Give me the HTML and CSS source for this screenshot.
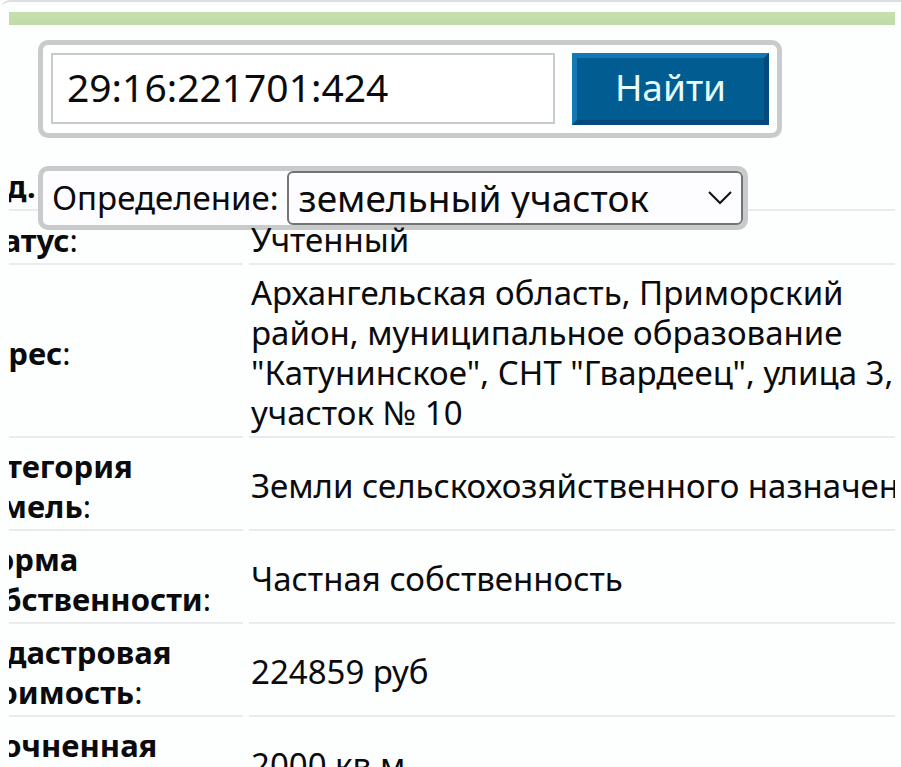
FILE: index.html
```html
<!DOCTYPE html>
<html lang="ru">
<head>
<meta charset="utf-8">
<title>Кадастровая справка</title>
<link rel="stylesheet" href="styles.css">
</head>
<body>
<main class="page">
  <div class="strip"></div>
  <form class="search">
    <input class="search-input" type="text" aria-label="Кадастровый номер" value="29:16:221701:424">
    <button class="search-button" type="button">Найти</button>
  </form>
  <section class="details">
    <form class="kind">
      <label for="kind">Определение:</label>
      <span class="select-wrap">
        <select id="kind"><option>земельный участок</option></select>
        <svg class="chevron" viewBox="0 0 24 14" aria-hidden="true"><path d="M1 1 L12 12 L23 1"/></svg>
      </span>
    </form>
    <table class="facts">
      <tr><th><b>Кад.</b></th><td></td></tr>
      <tr><th><span class="over"><b>Статус</b>:</span></th><td><span class="over">Учтенный</span></td></tr>
      <tr><th><b>Адрес</b>:</th><td class="address">Архангельская область, Приморский район, муниципальное образование "Катунинское", СНТ "Гвардеец", улица 3, участок № 10</td></tr>
      <tr><th><b>Категория<br>земель</b>:</th><td>Земли сельскохозяйственного назначения</td></tr>
      <tr><th><b>Форма<br>собственности</b>:</th><td>Частная собственность</td></tr>
      <tr><th><b>Кадастровая<br>стоимость</b>:</th><td>224859 руб</td></tr>
      <tr><th><b>Уточненная<br>площадь</b>:</th><td>2000 кв.м</td></tr>
    </table>
  </section>
</main>
</body>
</html>
```
FILE: styles.css
```css
* { box-sizing: border-box; }
body {
  margin: 0;
  height: 100vh;
  overflow: hidden;
  background: #fdfefe;
  color: #0b0b0d;
  font-family: "Noto Sans", sans-serif;
  font-size: 33px;
  line-height: 40px;
}
.page {
  display: flex;
  flex-direction: column;
  height: 100vh;
  padding: 10px 6px 0 8px;
  border: 1px solid #dedede;
  border-width: 2px 0 0 1px;
  border-left-color: transparent;
  border-radius: 10px 0 0 0;
}
.strip {
  flex: none;
  height: 13px;
  background: linear-gradient(#c8e0b0, #bfdaa8);
}
.search {
  display: flex;
  gap: 17px;
  width: fit-content;
  margin: 15px 0 0 29px;
  padding: 8px;
  border: 5px solid #c9cacb;
  border-radius: 10px;
}
.search-input {
  width: 504px;
  height: 71px;
  padding: 0 14px 4px;
  border: 2px solid #c9cacb;
  background: #fff;
  color: inherit;
  font: inherit;
  font-size: 39px;
}
.search-button {
  width: 197px;
  height: 72px;
  padding: 0 0 4px;
  border: 5px solid;
  border-color: #1279b4 #06497c #06497c #1279b4;
  background: #005c91;
  color: #e6fcff;
  font: inherit;
  font-size: 37px;
}
.details {
  position: relative;
  flex: 1;
  min-height: 0;
  margin-top: 19px;
  overflow: hidden;
}
.kind {
  position: absolute;
  z-index: 1;
  top: 9px;
  left: 29px;
  display: flex;
  align-items: center;
  gap: 8px;
  padding: 0 0 0 9px;
  border: 5px solid #c9cacb;
  border-radius: 10px;
  background: #fdfdff;
}
.select-wrap {
  position: relative;
  display: flex;
}
.kind select {
  width: 456px;
  height: 54px;
  padding: 0 10px;
  appearance: none;
  border: 2px solid #737476;
  border-radius: 6px;
  background: #fdfdff;
  color: inherit;
  font: inherit;
  font-size: 37px;
}
.chevron {
  position: absolute;
  top: 20px;
  right: 11px;
  width: 24px;
  height: 14px;
  fill: none;
  stroke: #111;
  stroke-width: 2;
  pointer-events: none;
}
.facts {
  width: calc(100% + 58px);
  margin-left: -52px;
  border-collapse: separate;
  border-spacing: 6px;
  table-layout: fixed;
}
.facts tr { height: 48px; }
.facts th, .facts td {
  padding: 2px 0 3px 2px;
  border-bottom: 2px solid #e9ebed;
  text-align: left;
  font-weight: 400;
  white-space: nowrap;
}
.facts th {
  width: 280px;
  padding-left: 4px;
  font-size: 31px;
}
.facts .address { white-space: normal; }
.over {
  position: relative;
  z-index: 2;
}
```
